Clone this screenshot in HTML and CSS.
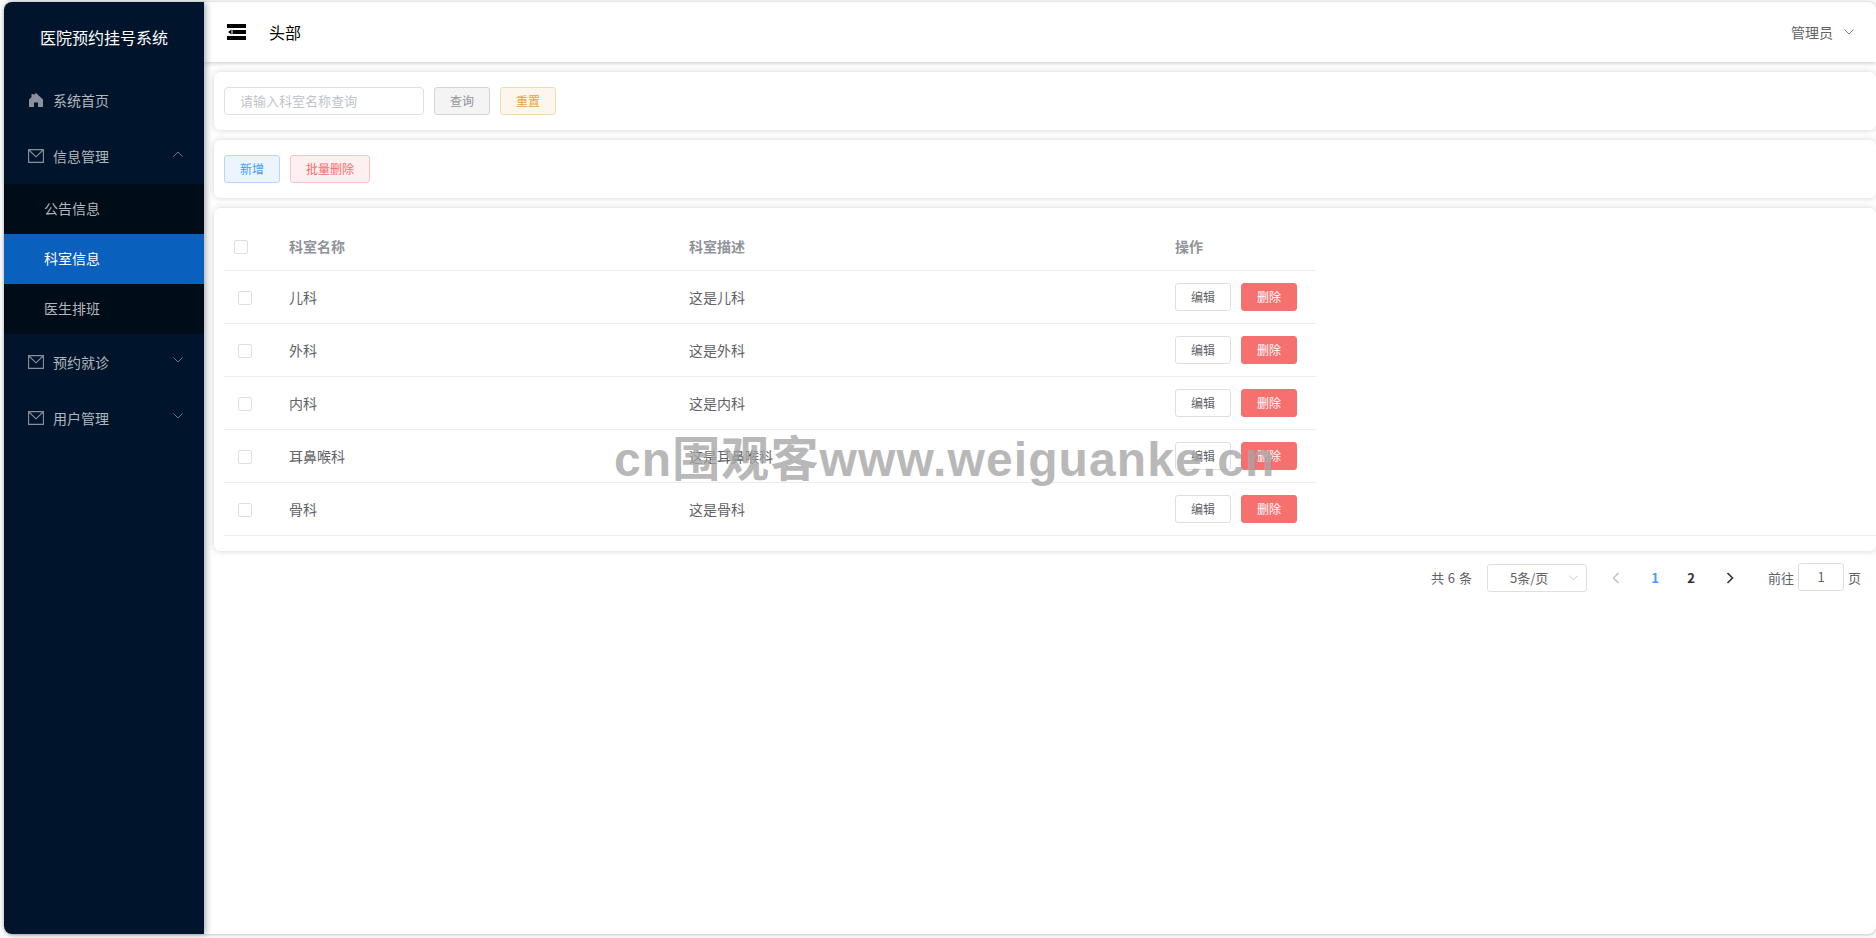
FILE: index.html
```html
<!DOCTYPE html>
<html lang="zh-CN">
<head>
<meta charset="UTF-8">
<title>医院预约挂号系统</title>
<link rel="stylesheet" href="styles.css">
</head>
<body>
<div class="layout">
  <aside class="sidebar">
    <div class="logo">医院预约挂号系统</div>
    <div class="menu-item">
      <svg class="menu-icon" viewBox="0 0 16 14"><path d="M8 0 5.500 2.300V1H3.500v3.100L1 6.500V14h5V9.500h4V14h5V6.500z" fill="#8a919c"/></svg>
      <span>系统首页</span>
    </div>
    <div class="menu-item">
      <svg class="menu-icon" viewBox="0 0 16 14"><path d="M.6.6h14.800v12.800H.6zM.9 1 8 7.800 15.100 1" fill="none" stroke="#8a919c" stroke-width="1.100"/></svg>
      <span>信息管理</span>
      <svg class="arrow" viewBox="0 0 10 6"><path d="M.5 5.500 5 1l4.500 4.500" fill="none" stroke="#6f7986"/></svg>
    </div>
    <div class="submenu">
      <div class="sub-item">公告信息</div>
      <div class="sub-item active">科室信息</div>
      <div class="sub-item">医生排班</div>
    </div>
    <div class="menu-item">
      <svg class="menu-icon" viewBox="0 0 16 14"><path d="M.6.6h14.800v12.800H.6zM.9 1 8 7.800 15.100 1" fill="none" stroke="#8a919c" stroke-width="1.100"/></svg>
      <span>预约就诊</span>
      <svg class="arrow" viewBox="0 0 10 6"><path d="M.5.5 5 5l4.500-4.500" fill="none" stroke="#6f7986"/></svg>
    </div>
    <div class="menu-item">
      <svg class="menu-icon" viewBox="0 0 16 14"><path d="M.6.6h14.800v12.800H.6zM.9 1 8 7.800 15.100 1" fill="none" stroke="#8a919c" stroke-width="1.100"/></svg>
      <span>用户管理</span>
      <svg class="arrow" viewBox="0 0 10 6"><path d="M.5.5 5 5l4.500-4.500" fill="none" stroke="#6f7986"/></svg>
    </div>
  </aside>

  <div class="main">
    <header class="topbar">
      <svg class="fold-icon" viewBox="0 0 19 16"><path d="M0 0h19v4H0zM0 12h19v4H0zM5.500 6H19v4H5.500zM4.500 5.500v5L1 8z" fill="#000"/></svg>
      <span class="topbar-title">头部</span>
      <span class="user">管理员</span>
      <svg class="user-arrow" viewBox="0 0 10 6"><path d="M.5.500 5 5l4.500-4.500" fill="none" stroke="#7d8590"/></svg>
    </header>

    <section class="card">
      <div class="fake-input">请输入科室名称查询</div>
      <button class="btn btn-gray">查询</button>
      <button class="btn btn-orange">重置</button>
    </section>

    <section class="card">
      <button class="btn btn-blue">新增</button>
      <button class="btn btn-red wide">批量删除</button>
    </section>

    <section class="card table-card">
      <div class="table-wrap">
        <table class="data-table">
          <colgroup>
            <col class="col-check"><col class="col-name"><col class="col-desc"><col class="col-op">
          </colgroup>
          <thead>
            <tr>
              <th><span class="checkbox"></span></th>
              <th>科室名称</th>
              <th>科室描述</th>
              <th>操作</th>
            </tr>
          </thead>
          <tbody>
            <tr>
              <td class="cell-check"><span class="checkbox"></span></td>
              <td>儿科</td>
              <td>这是儿科</td>
              <td><button class="btn btn-plain">编辑</button><button class="btn btn-danger">删除</button></td>
            </tr>
            <tr>
              <td class="cell-check"><span class="checkbox"></span></td>
              <td>外科</td>
              <td>这是外科</td>
              <td><button class="btn btn-plain">编辑</button><button class="btn btn-danger">删除</button></td>
            </tr>
            <tr>
              <td class="cell-check"><span class="checkbox"></span></td>
              <td>内科</td>
              <td>这是内科</td>
              <td><button class="btn btn-plain">编辑</button><button class="btn btn-danger">删除</button></td>
            </tr>
            <tr>
              <td class="cell-check"><span class="checkbox"></span></td>
              <td>耳鼻喉科</td>
              <td>这是耳鼻喉科</td>
              <td><button class="btn btn-plain">编辑</button><button class="btn btn-danger">删除</button></td>
            </tr>
            <tr>
              <td class="cell-check"><span class="checkbox"></span></td>
              <td>骨科</td>
              <td>这是骨科</td>
              <td><button class="btn btn-plain">编辑</button><button class="btn btn-danger">删除</button></td>
            </tr>
          </tbody>
        </table>
      </div>
    </section>

    <div class="pagination">
      <span class="total">共 6 条</span>
      <div class="page-size">
        <span>5条/页</span>
        <svg class="size-arrow" viewBox="0 0 10 6"><path d="M.5.5 5 5l4.500-4.500" fill="none" stroke="#c0c4cc"/></svg>
      </div>
      <svg class="page-arrow prev" viewBox="0 0 8 12"><path d="M6.500 1 1.500 6l5 5" fill="none" stroke="#c0c4cc" stroke-width="1.600"/></svg>
      <span class="page-num current">1</span>
      <span class="page-num">2</span>
      <svg class="page-arrow next" viewBox="0 0 8 12"><path d="M1.500 1l5 5-5 5" fill="none" stroke="#303133" stroke-width="1.600"/></svg>
      <span class="jump">前往</span>
      <div class="jump-input">1</div>
      <span class="jump-end">页</span>
    </div>
  </div>
</div>
<div class="watermark">cn围观客www.weiguanke.cn</div>
</body>
</html>
```

FILE: styles.css
```css
* {
  box-sizing: border-box;
}
html, body {
  margin: 0;
  height: 100%;
  background: #fafafa;
  overflow: hidden;
}
body {
  font-family: "Noto Sans CJK SC", "Noto Sans", sans-serif;
  font-size: 14px;
  color: #606266;
  position: relative;
}
.layout {
  display: flex;
  height: 932px;
  margin: 2px 0 0 4px;
  background: #fff;
  border-radius: 8px;
  box-shadow: 0 1px 3px rgba(0, 0, 0, .2);
}

/* sidebar */
.sidebar {
  width: 200px;
  flex-shrink: 0;
  background: #00152b;
  border-radius: 8px 0 0 8px;
  box-shadow: 2px 0 6px rgba(0, 21, 41, .35);
  position: relative;
  z-index: 2;
}
.logo {
  height: 70px;
  line-height: 71px;
  text-align: center;
  color: #fff;
  font-size: 16px;
}
.menu-item {
  height: 56px;
  display: flex;
  align-items: center;
  padding-left: 24px;
  color: #b3b7bd;
}
.menu-icon {
  width: 16px;
  height: 14px;
  margin-right: 9px;
}
.arrow {
  width: 10px;
  height: 6px;
  margin-left: auto;
  margin-right: 21px;
  margin-top: -4px;
}
.submenu {
  background: #000c17;
}
.sub-item {
  height: 50px;
  line-height: 48px;
  padding-left: 40px;
  color: #b3b7bd;
}
.sub-item.active {
  background: #0a60bd;
  color: #fff;
}

/* right side */
.main {
  flex: 1;
  min-width: 0;
  padding-left: 10px;
}
.topbar {
  height: 60px;
  margin-left: -10px;
  display: flex;
  align-items: center;
  padding-left: 23px;
  background: #fff;
  border-radius: 0 8px 0 0;
  box-shadow: 0 1px 5px rgba(0, 0, 0, .22);
}
.fold-icon {
  width: 19px;
  height: 16px;
}
.topbar-title {
  margin-left: 23px;
  font-size: 16px;
  color: #000;
}
.user {
  margin-left: auto;
  color: #606266;
}
.user-arrow {
  width: 10px;
  height: 6px;
  margin: 0 22px 0 11px;
}
.card {
  background: #fff;
  border-radius: 6px;
  box-shadow: 0 0 6px rgba(0, 0, 0, .18);
  margin-top: 10px;
  height: 58px;
  padding: 15px 10px;
  display: flex;
  align-items: flex-start;
}
.fake-input {
  width: 200px;
  height: 28px;
  line-height: 25px;
  padding-left: 15px;
  border: 1px solid #dcdfe6;
  border-radius: 4px;
  color: #c0c4cc;
  font-size: 13px;
  margin-right: 10px;
}
.btn {
  width: 56px;
  height: 28px;
  padding: 0 0 2px;
  border: 1px solid #dcdfe6;
  border-radius: 3px;
  background: #fff;
  color: #606266;
  font-family: inherit;
  font-size: 12px;
}
.btn + .btn {
  margin-left: 10px;
}
.btn.wide {
  width: 80px;
}
.btn-gray {
  background: #f4f4f5;
  border-color: #d3d4d6;
  color: #909399;
}
.btn-orange {
  background: #fdf6ec;
  border-color: #f5dab1;
  color: #e6a23c;
}
.btn-blue {
  background: #ecf5ff;
  border-color: #b3d8ff;
  color: #409eff;
}
.btn-red {
  background: #fef0f0;
  border-color: #fbc4c4;
  color: #f56c6c;
}
.btn-danger {
  background: #f77070;
  border-color: #f77070;
  color: #fff;
}

/* table */
.table-card {
  height: 343px;
  padding: 10px 0 15px 10px;
}
.table-wrap {
  flex: 1;
  height: 318px;
  border-bottom: 1px solid #ebeef5;
}
.data-table {
  width: 1092px;
  table-layout: fixed;
  border-collapse: collapse;
}
.col-check {
  width: 55px;
}
.col-name {
  width: 400px;
}
.col-desc {
  width: 486px;
}
.col-op {
  width: 151px;
}
.data-table th,
.data-table td {
  height: 53px;
  padding: 0 0 0 10px;
  text-align: left;
  border-bottom: 1px solid #ebeef5;
}
.data-table tbody tr:last-child td {
  border-bottom: none;
}
.data-table th {
  height: 52px;
  color: #909399;
  font-weight: 700;
  padding-top: 5px;
}
.data-table td {
  padding-top: 1px;
}
.data-table td.cell-check {
  padding-left: 14px;
}
.checkbox {
  display: block;
  width: 14px;
  height: 14px;
  margin-top: 2px;
  border: 1px solid #dcdfe6;
  border-radius: 2px;
  background: #fff;
}

/* pagination */
.pagination {
  display: flex;
  align-items: center;
  height: 28px;
  margin-top: 13px;
  padding-right: 15px;
  justify-content: flex-end;
  font-size: 13px;
}
.pagination span {
  margin-bottom: 2px;
}
.total {
  margin-right: 15px;
  word-spacing: 1px;
}
.page-size {
  width: 100px;
  height: 28px;
  border: 1px solid #dcdfe6;
  border-radius: 3px;
  display: flex;
  align-items: center;
  padding-left: 22px;
  margin-right: 25px;
}
.size-arrow {
  width: 9px;
  height: 6px;
  margin-left: auto;
  margin-right: 8px;
}
.page-arrow {
  width: 8px;
  height: 12px;
}
.page-num {
  width: 36px;
  text-align: center;
  font-weight: 700;
  color: #303133;
}
.page-num.current {
  color: #409eff;
  margin-left: 17px;
}
.next {
  margin-left: 17px;
}
.jump {
  margin-left: 34px;
}
.jump-input {
  width: 46px;
  height: 28px;
  line-height: 25px;
  margin: -2px 4px 0;
  text-align: center;
  border: 1px solid #dcdfe6;
  border-radius: 3px;
}

.watermark {
  position: absolute;
  left: 614px;
  top: 426px;
  font-family: "Liberation Sans", "Noto Sans CJK SC", sans-serif;
  font-size: 48px;
  font-weight: 700;
  letter-spacing: 1.100px;
  line-height: 68px;
  color: rgba(165, 165, 165, .8);
  white-space: nowrap;
}
```
